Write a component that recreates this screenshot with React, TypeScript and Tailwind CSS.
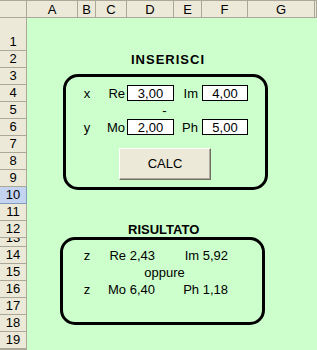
const cols = ["A", "B", "C", "D", "E", "F", "G", ""];
const rows = ["1", "2", "3", "4", "5", "6", "7", "8", "9", "10", "11", "12", "13", "14", "15", "16", "17", "18", "19", ""];

function InputBox({ value }: { value: string }) {
  return (
    <div className="flex h-[16px] w-[48px] items-center justify-center self-start border border-black bg-white text-[13px] leading-none">
      {value}
    </div>
  );
}

export default function App() {
  return (
    <div className="relative grid h-[350px] w-[317px] grid-cols-[27px_51px_18px_31px_47px_28px_46px_67px_2px] grid-rows-[18px_33px_repeat(11,17px)_9px_repeat(6,17px)_1px] overflow-hidden bg-[#ccffcc] font-['Liberation_Sans',Arial,sans-serif] text-[13px] text-black">
      {/* corner */}
      <div className="col-start-1 row-start-1 border-r border-b border-t border-[#aca899] bg-[#ece9d8]" />

      {cols.map((c, i) => (
        <div
          key={"c" + i}
          className="row-start-1 flex items-center justify-center border-t border-r border-b border-[#aca899] bg-[#ece9d8] leading-none"
        >
          {c}
        </div>
      ))}

      {rows.map((r) =>
        r === "10" ? (
          <div
            key={"r" + r}
            className="col-start-1 flex items-end justify-center overflow-hidden border-r border-b border-[#7f9db9] bg-[#c4d4f0] leading-[16px]"
          >
            {r}
          </div>
        ) : (
          <div
            key={"r" + r}
            className="col-start-1 flex items-end justify-center overflow-hidden border-r border-b border-[#aca899] bg-[#ece9d8] leading-[16px]"
          >
            {r}
          </div>
        )
      )}

      {/* floating shapes */}
      <div className="pointer-events-none absolute top-[74px] left-[63px] h-[116px] w-[205px] rounded-[15px] border-[3px] border-black" />
      <div className="pointer-events-none absolute top-[237px] left-[60px] h-[88px] w-[205px] rounded-[15px] border-[3px] border-black" />

      {/* INSERISCI */}
      <div className="col-start-5 row-start-3 flex items-end whitespace-nowrap pl-[4px] pb-[1px] font-bold leading-[15px] tracking-[1px]">
        INSERISCI
      </div>

      {/* riga 4 */}
      <div className="col-start-3 row-start-5 flex items-end justify-center pb-[1px] leading-[15px]">x</div>
      <div className="col-start-4 row-start-5 flex items-end justify-end pr-[2px] pb-[1px] leading-[15px]">Re</div>
      <div className="col-start-5 row-start-5 flex">
        <InputBox value="3,00" />
      </div>
      <div className="col-start-6 row-start-5 flex items-end justify-end pr-[4px] pb-[1px] leading-[15px]">Im</div>
      <div className="col-start-7 row-start-5 flex">
        <InputBox value="4,00" />
      </div>

      <div className="col-[5/7] row-start-6 flex items-end justify-center pb-[1px] leading-[15px]">-</div>

      {/* riga 6 */}
      <div className="col-start-3 row-start-7 flex items-end justify-center pb-[1px] leading-[15px]">y</div>
      <div className="col-start-4 row-start-7 flex items-end justify-end pr-[2px] pb-[1px] leading-[15px]">Mo</div>
      <div className="col-start-5 row-start-7 flex">
        <InputBox value="2,00" />
      </div>
      <div className="col-start-6 row-start-7 flex items-end justify-end pr-[4px] pb-[1px] leading-[15px]">Ph</div>
      <div className="col-start-7 row-start-7 flex">
        <InputBox value="5,00" />
      </div>

      {/* pulsante */}
      <button
        type="button"
        className="absolute top-[148px] left-[119px] flex h-[32px] w-[92px] items-center justify-center border border-t-white border-l-white border-r-[#716f64] border-b-[#716f64] bg-[#ece9d8] shadow-[inset_-1px_-1px_0_#aca899]"
      >
        CALC
      </button>

      {/* RISULTATO */}
      <div className="col-start-5 row-start-13 flex items-end whitespace-nowrap pl-[1px] pb-[1px] font-bold leading-[15px]">
        RISULTATO
      </div>

      <div className="col-start-3 row-start-15 flex items-end justify-center pb-[1px] leading-[15px]">z</div>
      <div className="col-[4/6] row-start-15 flex items-end justify-end whitespace-nowrap pr-[19px] pb-[1px] leading-[15px]">Re 2,43</div>
      <div className="col-[6/8] row-start-15 flex items-end justify-end whitespace-nowrap pr-[20px] pb-[1px] leading-[15px]">Im 5,92</div>

      <div className="col-[5/7] row-start-16 flex items-end justify-center pb-[1px] leading-[15px]">oppure</div>

      <div className="col-start-3 row-start-17 flex items-end justify-center pb-[1px] leading-[15px]">z</div>
      <div className="col-[4/6] row-start-17 flex items-end justify-end whitespace-nowrap pr-[19px] pb-[1px] leading-[15px]">Mo 6,40</div>
      <div className="col-[6/8] row-start-17 flex items-end justify-end whitespace-nowrap pr-[20px] pb-[1px] leading-[15px]">Ph 1,18</div>
    </div>
  );
}
